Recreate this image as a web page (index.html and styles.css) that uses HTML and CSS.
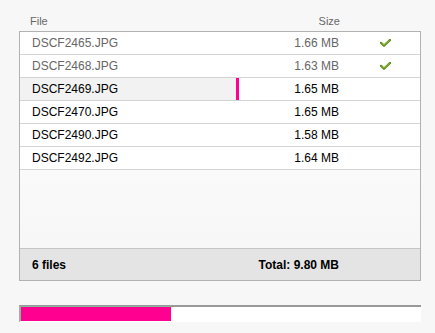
FILE: index.html
```html
<!DOCTYPE html>
<html>
<head>
<meta charset="utf-8">
<link rel="stylesheet" href="styles.css">
</head>
<body>
<div class="page">
  <div class="head">
    <span class="h-name">File</span>
    <span class="h-size">Size</span>
    <span class="h-status"></span>
  </div>
  <div class="table">
    <div class="rows">
      <div class="row done">
        <span class="name">DSCF2465.JPG</span>
        <span class="size">1.66 MB</span>
        <span class="status"><svg class="check" width="11" height="8" viewBox="0 0 11 8"><path d="M1 3.8 L4 6.6 L10 1" fill="none" stroke="#4f7f10" stroke-width="2.2" stroke-linecap="round" stroke-linejoin="round"/><path d="M1.4 3.8 L4 6.2 L9.6 1.2" fill="none" stroke="#a8cc3a" stroke-width="1"/></svg></span>
      </div>
      <div class="row done">
        <span class="name">DSCF2468.JPG</span>
        <span class="size">1.63 MB</span>
        <span class="status"><svg class="check" width="11" height="8" viewBox="0 0 11 8"><path d="M1 3.8 L4 6.6 L10 1" fill="none" stroke="#4f7f10" stroke-width="2.2" stroke-linecap="round" stroke-linejoin="round"/><path d="M1.4 3.8 L4 6.2 L9.6 1.2" fill="none" stroke="#a8cc3a" stroke-width="1"/></svg></span>
      </div>
      <div class="row uploading" style="--progress: 216px">
        <span class="name">DSCF2469.JPG</span>
        <span class="size">1.65 MB</span>
        <span class="status"></span>
      </div>
      <div class="row">
        <span class="name">DSCF2470.JPG</span>
        <span class="size">1.65 MB</span>
        <span class="status"></span>
      </div>
      <div class="row">
        <span class="name">DSCF2490.JPG</span>
        <span class="size">1.58 MB</span>
        <span class="status"></span>
      </div>
      <div class="row">
        <span class="name">DSCF2492.JPG</span>
        <span class="size">1.64 MB</span>
        <span class="status"></span>
      </div>
    </div>
    <div class="empty"></div>
    <div class="foot">
      <span class="name">6 files</span>
      <span class="size">Total: 9.80 MB</span>
      <span class="status"></span>
    </div>
  </div>
  <div class="progress">
    <div class="fill" style="width: 150px"></div>
  </div>
</div>
</body>
</html>
```
FILE: styles.css
```css
html, body {
  margin: 0;
  padding: 0;
  background: #f7f7f7;
}
body {
  font-family: "Liberation Sans", Arial, sans-serif;
  font-size: 12px;
  color: #000;
}
.page {
  padding: 14px 14px 0 19px;
  width: 402px;
}
.head {
  display: grid;
  grid-template-columns: 1fr 100px 81px;
  height: 17px;
  line-height: 14px;
  font-size: 11px;
  color: #666;
}
.h-name {
  padding-left: 11px;
}
.h-size {
  text-align: right;
}
.table {
  border: 1px solid #b2b2b2;
  background: #f9f9f9;
}
.row, .foot {
  display: grid;
  grid-template-columns: 1fr 100px 81px;
  align-items: center;
}
.row {
  height: 22px;
  border-bottom: 1px solid #d4d4d4;
  background: #fff;
}
.row.done {
  color: #666;
}
.row.uploading {
  background: linear-gradient(to right,
    #f2f2f2 0, #f2f2f2 var(--progress),
    #ff0090 var(--progress), #ff0090 calc(var(--progress) + 3px),
    #fff calc(var(--progress) + 3px));
}
.name {
  padding-left: 12px;
}
.size {
  text-align: right;
}
.status {
  padding-left: 41px;
  display: flex;
  align-items: center;
}
.check {
  display: block;
}
.empty {
  height: 78px;
  background: linear-gradient(#fafafa, #f7f7f7);
}
.foot {
  height: 31px;
  border-top: 1px solid #c4c4c4;
  background: #e4e4e4;
  font-weight: bold;
}
.progress {
  margin-top: 24px;
  height: 16px;
  border-top: 1px solid #999;
  border-left: 1px solid #aaa;
  background: #fff;
  box-shadow: inset 0 1px 0 #999;
}
.fill {
  height: 14px;
  background: #ff0090;
  border-top: 1px solid #86b99c;
  border-left: 1px solid #86b99c;
}
```
